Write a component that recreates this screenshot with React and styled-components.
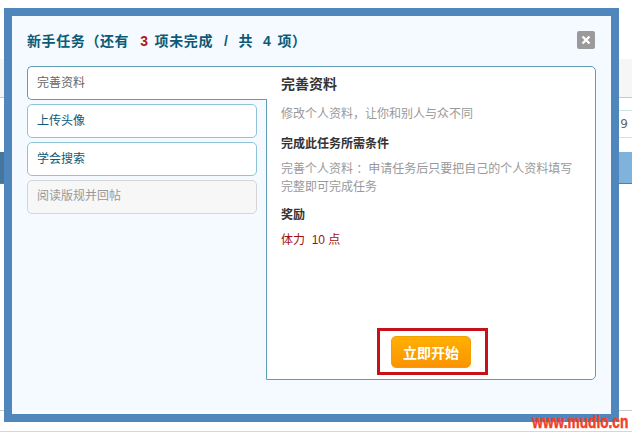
import React from "react";
import styled, { createGlobalStyle } from "styled-components";

const Global = createGlobalStyle`
  html, body { margin: 0; padding: 0; background: #fff; }
  #root { width: 632px; height: 432px; overflow: hidden; position: relative; }
  * { box-sizing: border-box; }
`;
const cjk = `"Liberation Sans", "Noto Sans CJK SC", sans-serif`;

const Page = styled.div`
  width: 632px; height: 432px; position: relative; overflow: hidden; background: #fff;
  display: flex; flex-direction: column; font-family: ${cjk}; padding-top: 59px; text-spacing-trim: space-all;
`;
const BackHead = styled.div`height: 39px; background: #f6f6f6; border-bottom: 1px solid #b9cdd6; flex: none;`;
const BackRow = styled.div`
  height: ${p => p.$h}px; flex: none; border-bottom: 1px solid #cfe2e6; margin-left: 300px;
  display: flex; justify-content: flex-end; align-items: center; padding-right: 4px;
  font: 12px "DejaVu Sans", sans-serif; color: #667;
`;
const BackBand = styled.div`
  height: 32px; flex: none; background: linear-gradient(to right, #44779f 4px, #7fb3dc 4px); border-bottom: 1px solid #5c7f99; margin-top: 14px;
`;
const BackFill = styled.div`flex: 1;`;
const BackLine = styled.div`height: 1px; background: ${p => p.$c}; flex: none; margin-bottom: ${p => p.$mb}px;`;

const Modal = styled.div`
  position: absolute; left: 4px; top: 8px; width: 615px; height: 414px;
  border: 8px solid #4f86bc; background: #f4faff;
  padding: 15px 15px 34px; display: flex; flex-direction: column;
`;
const Header = styled.div`display: flex; justify-content: space-between; align-items: center; height: 18px; margin-bottom: 17px;`;
const Title = styled.h2`margin: 0; font-size: 14px; font-weight: 700; color: #0c5b76; white-space: pre; letter-spacing: 0.6px; font-family: ${cjk};`;
const Mid = styled.span`margin: 0 ${p => p.$r}px 0 ${p => p.$l}px;`;
const Count = styled(Mid)`color: #b3161c;`;
const Close = styled.button`
  width: 18px; height: 18px; padding: 0; margin-right: 1px; border: 0; border-radius: 2px; background: #9a9a9a;
  display: flex; align-items: center; justify-content: center;
`;
const Body = styled.div`flex: 1; display: flex; min-height: 0;`;
const Tabs = styled.div`width: 230px; flex: none; display: flex; flex-direction: column; gap: 4px;`;
const Tab = styled.div`
  height: 34px; line-height: 33px; padding-left: 9px; font-size: 12px; color: #0c5b76;
  border: 1px solid #8fc4d4; border-radius: 5px; background: #fff; flex: none;
`;
const ActiveTab = styled(Tab)`
  width: 240px; position: relative; z-index: 1; color: #666;
  border-color: #5f9db5; border-right: 0; border-radius: 5px 0 0 5px;
`;
const DisabledTab = styled(Tab)`color: #999; background: #f7f7f7; border-color: #d5d5d5; line-height: 31px;`;
const Panel = styled.div`
  margin-left: 9px; flex: 1; background: #fff; border: 1px solid #5f9db5;
  border-radius: 0 5px 5px 0; padding: 8px 14px 3px; display: flex; flex-direction: column;
`;
const PanelTitle = styled.h3`margin: 0 0 12px; font-size: 14px; line-height: 18px; color: #333; font-weight: 700; font-family: ${cjk};`;
const Text = styled.p`margin: 0 0 ${p => p.$mb}px; font-size: 12px; line-height: 18px; color: #999;`;
const Sub = styled.h4`margin: 0 0 7px; font-size: 12px; line-height: 18px; color: #333; font-weight: 700; font-family: ${cjk};`;
const Reward = styled.p`margin: 0; font-size: 12px; line-height: 18px; color: #a01010; white-space: pre;`;
const Actions = styled.div`margin-top: auto; margin-bottom: 1px; padding-left: 3px; display: flex; justify-content: center;`;
const Highlight = styled.div`border: 3px solid #c8101a; padding: 5px 14px 4px 11px; width: 111px; height: 47px;`;
const Start = styled.button`
  width: 80px; height: 32px; border: 1px solid #f0a000; border-radius: 5px; padding: 0;
  background: linear-gradient(#ffb000, #fb9300); color: #fff; font-size: 14px; font-weight: 700; font-family: ${cjk};
`;
const Mark = styled.div`
  position: absolute; right: 4px; top: 414px; font: 700 18px/17px "Liberation Sans", sans-serif;
  color: #f0402a; -webkit-text-stroke: 0.5px #f0402a; transform: scaleX(0.76); transform-origin: right top; white-space: pre;
`;

export default function App() {
  return (
    <>
      <Global />
      <Page>
        <BackHead />
        <BackRow $h={13} />
        <BackRow $h={27}>9</BackRow>
        <BackBand />
        <BackFill />
        <BackLine $c="#c9c9c9" $mb={20} />
        <BackLine $c="#c5dfe0" $mb={0} />
        <Modal>
          <Header>
            <Title>新手任务（还有<Count $l={11} $r={6}>3</Count>项未完成<Mid $l={11} $r={10}>/</Mid>共<Mid $l={10} $r={6}>4</Mid>项）</Title>
            <Close aria-label="关闭">
              <svg width="10" height="10" viewBox="0 0 10 10"><path d="M1.5 1.5l7 7M8.5 1.5l-7 7" stroke="#fff" strokeWidth="2.4" /></svg>
            </Close>
          </Header>
          <Body>
            <Tabs>
              <ActiveTab>完善资料</ActiveTab>
              <Tab>上传头像</Tab>
              <Tab>学会搜索</Tab>
              <DisabledTab>阅读版规并回帖</DisabledTab>
            </Tabs>
            <Panel>
              <PanelTitle>完善资料</PanelTitle>
              <Text $mb={12}>修改个人资料，让你和别人与众不同</Text>
              <Sub>完成此任务所需条件</Sub>
              <Text $mb={10}>完善个人资料 ：申请任务后只要把自己的个人资料填写<br />完整即可完成任务</Text>
              <Sub>奖励</Sub>
              <Reward>体力  10 点</Reward>
              <Actions>
                <Highlight><Start>立即开始</Start></Highlight>
              </Actions>
            </Panel>
          </Body>
        </Modal>
        <Mark>www.mudio.cn</Mark>
      </Page>
    </>
  );
}
